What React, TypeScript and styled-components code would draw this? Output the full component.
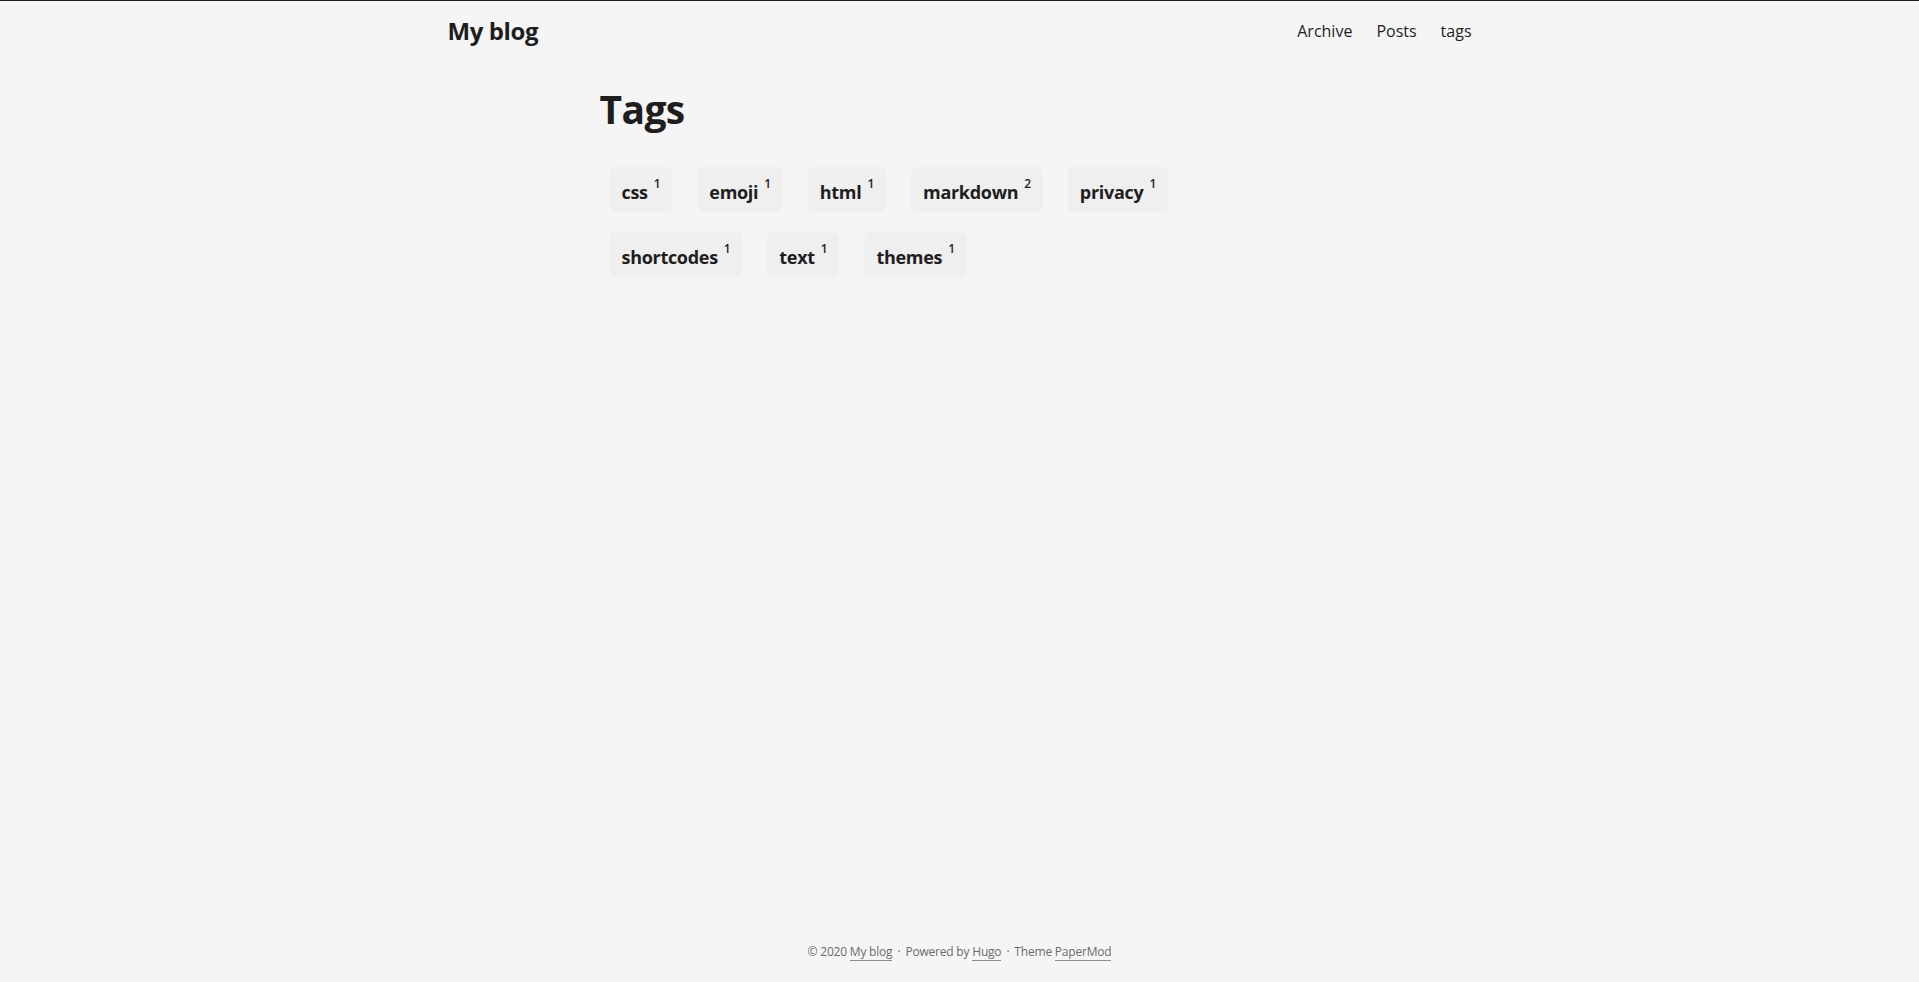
// Tags page, PaperMod look

import * as React from 'react'
import styled, { createGlobalStyle } from 'styled-components'

const GlobalStyle = createGlobalStyle`
  * { box-sizing: border-box; }
  html, body { margin: 0; padding: 0; }
  body {
    background: #f5f5f5;
    color: #1e1e1e;
    font-family: "Open Sans", "Noto Sans", "Liberation Sans", sans-serif;
    font-size: 18px;
    line-height: 1.6;
    border-top: 1px solid #1d1d1d;
  }
  a { color: inherit; text-decoration: none; }
  ul { list-style: none; margin: 0; padding: 0; }
`

const Header = styled.header`
  display: flex;
  justify-content: space-between;
  align-items: center;
  max-width: 1072px;
  height: 59px;
  margin: 0 auto;
  padding: 0 24px;
  line-height: 60px;
`

const Logo = styled.a`
  font-size: 24px;
  font-weight: 700;
  letter-spacing: -0.4px;
`

const Menu = styled.ul`
  display: flex;
  gap: 24px;
  font-size: 16px;
`

const Main = styled.main`
  max-width: 768px;
  min-height: calc(100vh - 120px);
  margin: 0 auto;
  padding: 24px;
`

const Title = styled.h1`
  margin: 2px 0 24px;
  font-size: 39px;
  line-height: 1.2;
  font-weight: 700;
  letter-spacing: -0.6px;
`

const TagList = styled.ul`
  display: flex;
  flex-wrap: wrap;
  column-gap: 5px;
`

const TagItem = styled.li`
  margin: 10px;
  font-weight: 700;
`

const TagLink = styled.a`
  display: block;
  height: 45px;
  padding: 9px 12px 3px;
  background: #efefef;
  border-radius: 6px;
  font-size: 18px;
  line-height: 33px;
  letter-spacing: -0.3px;
`

const Count = styled.sup`
  margin-left: 6px;
  font-size: 12px;
  font-weight: 600;
  line-height: 0;
  vertical-align: 11px;
`

const Footer = styled.footer`
  max-width: 768px;
  margin: 0 auto;
  padding: 18px 24px;
  text-align: center;
  font-size: 12px;
  line-height: 24px;
  color: #6c6c6c;
  letter-spacing: -0.2px;

  a { border-bottom: 1px solid #8c8c8c; }
`

const Dot = styled.span`
  margin: 0 5px;
`

const tags = [
  { name: 'css', count: 1 },
  { name: 'emoji', count: 1 },
  { name: 'html', count: 1 },
  { name: 'markdown', count: 2 },
  { name: 'privacy', count: 1 },
  { name: 'shortcodes', count: 1 },
  { name: 'text', count: 1 },
  { name: 'themes', count: 1 },
]

export default function App() {
  return (
    <>
      <GlobalStyle />
      <Header>
        <Logo href="#">My blog</Logo>
        <Menu>
          <li><a href="#">Archive</a></li>
          <li><a href="#">Posts</a></li>
          <li><a href="#">tags</a></li>
        </Menu>
      </Header>
      <Main>
        <Title>Tags</Title>
        <TagList>
          {tags.map(t => (
            <TagItem key={t.name}>
              <TagLink href="#">
                {t.name}
                <Count>{t.count}</Count>
              </TagLink>
            </TagItem>
          ))}
        </TagList>
      </Main>
      <Footer>
        <span>© 2020 <a href="#">My blog</a></span>
        <Dot>·</Dot>
        <span>Powered by <a href="#">Hugo</a></span>
        <Dot>·</Dot>
        <span>Theme <a href="#">PaperMod</a></span>
      </Footer>
    </>
  )
}
